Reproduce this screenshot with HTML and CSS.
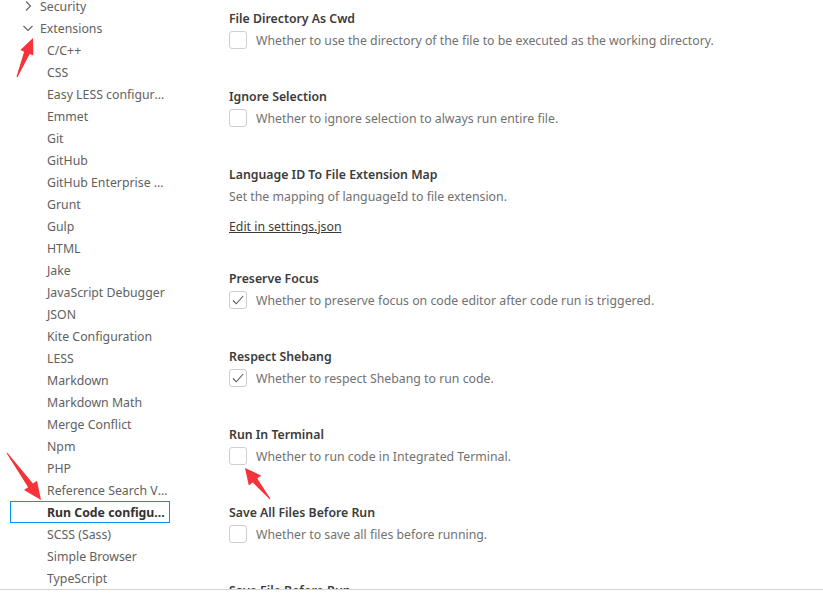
FILE: index.html
```html
<!DOCTYPE html>
<html>
<head>
<meta charset="utf-8">
<link rel="stylesheet" href="styles.css">
</head>
<body>
<div class="window">
  <div class="main">
    <nav class="tree">
      <div class="row top"><svg class="chev" width="16" height="16" viewBox="0 0 16 16"><path d="M6 3.5 L10.5 8 L6 12.5" fill="none" stroke="#616161" stroke-width="1.1"/></svg><span class="label">Security</span></div>
      <div class="row top"><svg class="chev" width="16" height="16" viewBox="0 0 16 16"><path d="M3.5 6 L8 10.5 L12.5 6" fill="none" stroke="#616161" stroke-width="1.1"/></svg><span class="label">Extensions</span></div>
      <div class="row child">C/C++</div>
      <div class="row child">CSS</div>
      <div class="row child">Easy LESS configuration</div>
      <div class="row child">Emmet</div>
      <div class="row child">Git</div>
      <div class="row child">GitHub</div>
      <div class="row child">GitHub Enterprise Server</div>
      <div class="row child">Grunt</div>
      <div class="row child">Gulp</div>
      <div class="row child">HTML</div>
      <div class="row child">Jake</div>
      <div class="row child">JavaScript Debugger</div>
      <div class="row child">JSON</div>
      <div class="row child">Kite Configuration</div>
      <div class="row child">LESS</div>
      <div class="row child">Markdown</div>
      <div class="row child">Markdown Math</div>
      <div class="row child">Merge Conflict</div>
      <div class="row child">Npm</div>
      <div class="row child">PHP</div>
      <div class="row child">Reference Search View</div>
      <div class="row child selected">Run Code configuration</div>
      <div class="row child">SCSS (Sass)</div>
      <div class="row child">Simple Browser</div>
      <div class="row child">TypeScript</div>
    </nav>
    <section class="settings">
      <div class="setting">
        <div class="title">File Directory As Cwd</div>
        <label class="check-row"><span class="box"></span><span class="desc">Whether to use the directory of the file to be executed as the working directory.</span></label>
      </div>
      <div class="setting">
        <div class="title">Ignore Selection</div>
        <label class="check-row"><span class="box"></span><span class="desc">Whether to ignore selection to always run entire file.</span></label>
      </div>
      <div class="setting tall">
        <div class="title">Language ID To File Extension Map</div>
        <div class="desc plain">Set the mapping of languageId to file extension.</div>
        <a class="link">Edit in settings.json</a>
      </div>
      <div class="setting">
        <div class="title">Preserve Focus</div>
        <label class="check-row"><span class="box"><svg width="16" height="16" viewBox="0 0 16 16"><path d="M3 8.5 L6.3 11.8 L13.2 4" fill="none" stroke="#5a5a5a" stroke-width="1.1"/></svg></span><span class="desc">Whether to preserve focus on code editor after code run is triggered.</span></label>
      </div>
      <div class="setting">
        <div class="title">Respect Shebang</div>
        <label class="check-row"><span class="box"><svg width="16" height="16" viewBox="0 0 16 16"><path d="M3 8.5 L6.3 11.8 L13.2 4" fill="none" stroke="#5a5a5a" stroke-width="1.1"/></svg></span><span class="desc">Whether to respect Shebang to run code.</span></label>
      </div>
      <div class="setting">
        <div class="title">Run In Terminal</div>
        <label class="check-row"><span class="box"></span><span class="desc">Whether to run code in Integrated Terminal.</span></label>
      </div>
      <div class="setting">
        <div class="title">Save All Files Before Run</div>
        <label class="check-row"><span class="box"></span><span class="desc">Whether to save all files before running.</span></label>
      </div>
      <div class="setting">
        <div class="title">Save File Before Run</div>
        <label class="check-row"><span class="box"></span><span class="desc">Whether to save current file before running.</span></label>
      </div>
    </section>
  </div>
  <svg class="annot" width="823" height="603" viewBox="0 0 823 603">
    <polygon fill="#f5333b" points="16.5,76.8 24.1,51.7 20.4,50.1 33,38 33.4,55.5 29.7,53.9 17.5,77.2"/>
    <polygon fill="#f5333b" points="6.6,453.3 28.1,487.2 24.0,490.1 41,500 37.0,480.7 32.9,483.6 7.4,452.7"/>
    <polygon fill="#f5333b" points="270.4,498.7 257.3,478.6 261.2,475.5 245,468 248.8,485.5 252.7,482.4 269.6,499.3"/>
  </svg>
</div>
</body>
</html>
```

FILE: styles.css
```css
* { box-sizing: border-box; }
html, body { margin: 0; padding: 0; background: #fff; }
body {
  font-family: "Segoe UI", "Noto Sans", "Open Sans", sans-serif;
  font-size: 12.3px;
  color: #616161;
}
.window {
  position: relative;
  width: 823px;
  height: 603px;
  overflow: hidden;
}
.main {
  display: flex;
  height: 590px;
  overflow: hidden;
  border-bottom: 1px solid #d4d4d4;
}
.tree {
  width: 200px;
  flex: none;
  margin-top: -5px;
}
.row {
  height: 22px;
  line-height: 24px;
  white-space: nowrap;
  overflow: hidden;
  text-overflow: ellipsis;
}
.row.top {
  display: flex;
  align-items: center;
  padding-left: 20px;
}
.chev { flex: none; margin-right: 4px; }
.row.top .label { line-height: 24px; height: 22px; }
.row.child {
  margin-left: 10px;
  width: 160px;
  padding-left: 37px;
  padding-right: 1px;
}
.row.selected {
  border: 1px solid #0090f1;
  line-height: 22px;
  font-weight: 700;
  color: #333;
  padding-left: 36px;
}
.settings {
  flex: 1;
  padding-left: 29px;
}
.setting {
  height: 78px;
  padding-top: 9px;
}
.setting.tall { height: 104px; }
.title {
  font-weight: 600;
  color: #3b3b3b;
  line-height: 20px;
  white-space: nowrap;
}
.check-row {
  display: flex;
  align-items: center;
  margin-top: 2px;
  height: 18px;
}
.box {
  width: 18px;
  height: 18px;
  border: 1px solid #cecece;
  border-radius: 3px;
  background: #fff;
  flex: none;
  margin-right: 9px;
  display: flex;
  align-items: center;
  justify-content: center;
}
.desc {
  color: #717171;
  white-space: nowrap;
  line-height: 20px;
  padding-top: 1px;
}
.desc.plain {
  margin-top: 1px;
  line-height: 20px;
}
.link {
  display: inline-block;
  margin-top: 10px;
  line-height: 20px;
  color: #3b3b3b;
  text-decoration: underline;
}
.annot {
  position: absolute;
  left: 0;
  top: 0;
  pointer-events: none;
}
```
